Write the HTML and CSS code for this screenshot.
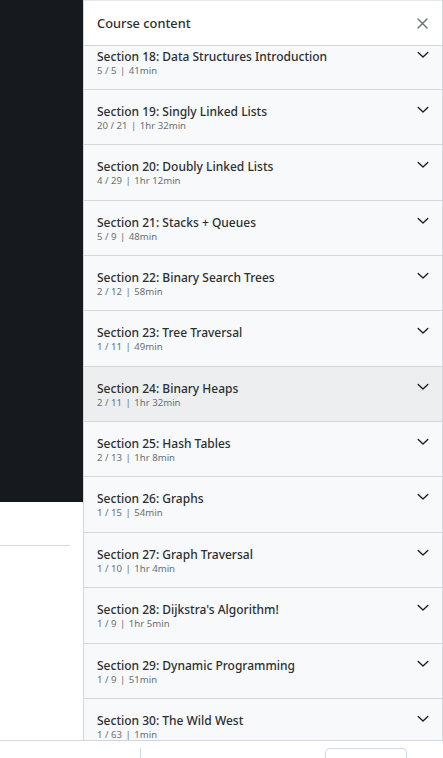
FILE: index.html
```html
<!DOCTYPE html>
<html lang="en">
<head>
<meta charset="utf-8">
<title>Course content</title>
<link rel="stylesheet" href="styles.css">
</head>
<body>
<div class="layout">
  <main class="main">
    <div class="video"></div>
    <div class="below">
      <div class="rule"></div>
    </div>
  </main>
  <aside class="sidebar">
    <header class="sidebar-head">
      <h2 class="sidebar-title">Course content</h2>
      <button class="close" aria-label="Close">
        <svg width="11" height="11" viewBox="0 0 11 11"><path d="M1 1L10 10M10 1L1 10" stroke="#6a6f73" stroke-width="1.4" stroke-linecap="round"/></svg>
      </button>
    </header>
    <div class="sections">
      <ul class="list">
        <li class="section"><div class="text"><div class="name">Section 18: Data Structures Introduction</div><div class="meta">5 / 5 <span class="sep">|</span> 41min</div></div><svg class="chev" viewBox="0 0 12 8"><path d="M1.2 1.5L6 6L10.8 1.5" fill="none" stroke="#1c1d1f" stroke-width="1.35" stroke-linecap="round" stroke-linejoin="round"/></svg></li>
        <li class="section"><div class="text"><div class="name">Section 19: Singly Linked Lists</div><div class="meta">20 / 21 <span class="sep">|</span> 1hr 32min</div></div><svg class="chev" viewBox="0 0 12 8"><path d="M1.2 1.5L6 6L10.8 1.5" fill="none" stroke="#1c1d1f" stroke-width="1.35" stroke-linecap="round" stroke-linejoin="round"/></svg></li>
        <li class="section"><div class="text"><div class="name">Section 20: Doubly Linked Lists</div><div class="meta">4 / 29 <span class="sep">|</span> 1hr 12min</div></div><svg class="chev" viewBox="0 0 12 8"><path d="M1.2 1.5L6 6L10.8 1.5" fill="none" stroke="#1c1d1f" stroke-width="1.35" stroke-linecap="round" stroke-linejoin="round"/></svg></li>
        <li class="section"><div class="text"><div class="name">Section 21: Stacks + Queues</div><div class="meta">5 / 9 <span class="sep">|</span> 48min</div></div><svg class="chev" viewBox="0 0 12 8"><path d="M1.2 1.5L6 6L10.8 1.5" fill="none" stroke="#1c1d1f" stroke-width="1.35" stroke-linecap="round" stroke-linejoin="round"/></svg></li>
        <li class="section"><div class="text"><div class="name">Section 22: Binary Search Trees</div><div class="meta">2 / 12 <span class="sep">|</span> 58min</div></div><svg class="chev" viewBox="0 0 12 8"><path d="M1.2 1.5L6 6L10.8 1.5" fill="none" stroke="#1c1d1f" stroke-width="1.35" stroke-linecap="round" stroke-linejoin="round"/></svg></li>
        <li class="section"><div class="text"><div class="name">Section 23: Tree Traversal</div><div class="meta">1 / 11 <span class="sep">|</span> 49min</div></div><svg class="chev" viewBox="0 0 12 8"><path d="M1.2 1.5L6 6L10.8 1.5" fill="none" stroke="#1c1d1f" stroke-width="1.35" stroke-linecap="round" stroke-linejoin="round"/></svg></li>
        <li class="section hover"><div class="text"><div class="name">Section 24: Binary Heaps</div><div class="meta">2 / 11 <span class="sep">|</span> 1hr 32min</div></div><svg class="chev" viewBox="0 0 12 8"><path d="M1.2 1.5L6 6L10.8 1.5" fill="none" stroke="#1c1d1f" stroke-width="1.35" stroke-linecap="round" stroke-linejoin="round"/></svg></li>
        <li class="section"><div class="text"><div class="name">Section 25: Hash Tables</div><div class="meta">2 / 13 <span class="sep">|</span> 1hr 8min</div></div><svg class="chev" viewBox="0 0 12 8"><path d="M1.2 1.5L6 6L10.8 1.5" fill="none" stroke="#1c1d1f" stroke-width="1.35" stroke-linecap="round" stroke-linejoin="round"/></svg></li>
        <li class="section"><div class="text"><div class="name">Section 26: Graphs</div><div class="meta">1 / 15 <span class="sep">|</span> 54min</div></div><svg class="chev" viewBox="0 0 12 8"><path d="M1.2 1.5L6 6L10.8 1.5" fill="none" stroke="#1c1d1f" stroke-width="1.35" stroke-linecap="round" stroke-linejoin="round"/></svg></li>
        <li class="section"><div class="text"><div class="name">Section 27: Graph Traversal</div><div class="meta">1 / 10 <span class="sep">|</span> 1hr 4min</div></div><svg class="chev" viewBox="0 0 12 8"><path d="M1.2 1.5L6 6L10.8 1.5" fill="none" stroke="#1c1d1f" stroke-width="1.35" stroke-linecap="round" stroke-linejoin="round"/></svg></li>
        <li class="section"><div class="text"><div class="name">Section 28: Dijkstra's Algorithm!</div><div class="meta">1 / 9 <span class="sep">|</span> 1hr 5min</div></div><svg class="chev" viewBox="0 0 12 8"><path d="M1.2 1.5L6 6L10.8 1.5" fill="none" stroke="#1c1d1f" stroke-width="1.35" stroke-linecap="round" stroke-linejoin="round"/></svg></li>
        <li class="section"><div class="text"><div class="name">Section 29: Dynamic Programming</div><div class="meta">1 / 9 <span class="sep">|</span> 51min</div></div><svg class="chev" viewBox="0 0 12 8"><path d="M1.2 1.5L6 6L10.8 1.5" fill="none" stroke="#1c1d1f" stroke-width="1.35" stroke-linecap="round" stroke-linejoin="round"/></svg></li>
        <li class="section"><div class="text"><div class="name">Section 30: The Wild West</div><div class="meta">1 / 63 <span class="sep">|</span> 1min</div></div><svg class="chev" viewBox="0 0 12 8"><path d="M1.2 1.5L6 6L10.8 1.5" fill="none" stroke="#1c1d1f" stroke-width="1.35" stroke-linecap="round" stroke-linejoin="round"/></svg></li>
      </ul>
    </div>
  </aside>
</div>
<footer class="footer">
  <div class="foot-left"></div>
  <div class="foot-mid"></div>
  <div class="foot-btn"></div>
</footer>
</body>
</html>
```
FILE: styles.css
```css
* { box-sizing: border-box; }
html, body { margin: 0; padding: 0; }
body {
  width: 443px;
  height: 758px;
  overflow: hidden;
  background: #fff;
  font-family: "Noto Sans", "Open Sans", sans-serif;
  color: #1c1d1f;
}
.layout {
  display: grid;
  grid-template-columns: 83px 360px;
  height: 758px;
}
.main { display: flex; flex-direction: column; }
.video { height: 502px; background: #16191e; }
.below { padding-top: 43px; }
.rule { width: 70px; height: 1px; background: #d1d7dc; }
.sidebar {
  display: flex;
  flex-direction: column;
  height: 758px;
  border-left: 1px solid #d1d7dc;
  border-right: 1px solid #d1d7dc;
  background: #f7f9fa;
}
.sidebar-head {
  height: 46px;
  flex: none;
  display: flex;
  align-items: center;
  justify-content: space-between;
  padding: 0 14px 0 13px;
  background: #fff;
  border-top: 1px solid #e4e7ea;
  border-bottom: 1px solid #d1d7dc;
  position: relative;
  z-index: 1;
}
.sidebar-title {
  margin: 0;
  font-size: 12.8px;
  font-weight: 500;
  color: #2d2f31;
}
.close {
  border: 0;
  background: none;
  padding: 0;
  width: 11px;
  height: 11px;
  display: flex;
}
.sections { flex: 1; overflow: hidden; }
.list {
  list-style: none;
  margin: -11.4px 0 0;
  padding: 0;
}
.section {
  height: 55.36px;
  display: flex;
  justify-content: space-between;
  align-items: flex-start;
  padding: 13px 13px 0 13px;
  border-bottom: 1px solid #d1d7dc;
  background: #f7f9fa;
}
.section.hover { background: #eceef0; }
.name {
  font-size: 12px;
  font-weight: 500;
  line-height: 17px;
  color: #2d2f31;
}
.meta {
  font-size: 9.6px;
  line-height: 12px;
  color: #6a6f73;
}
.sep { margin: 0 1px; }
.chev { width: 12px; height: 8px; margin-top: 3px; flex: none; }
.footer {
  position: fixed;
  left: 0;
  right: 0;
  bottom: 0;
  height: 18px;
  background: #fff;
  border-top: 1px solid #d1d7dc;
  display: flex;
  align-items: flex-end;
  z-index: 2;
}
.foot-left { width: 140px; }
.foot-mid { width: 1px; height: 10px; background: #d1d7dc; }
.foot-btn {
  margin-left: 184px;
  width: 82px;
  height: 10px;
  border: 1px solid #d1d7dc;
  border-bottom: 0;
  border-radius: 5px 5px 0 0;
}
```
